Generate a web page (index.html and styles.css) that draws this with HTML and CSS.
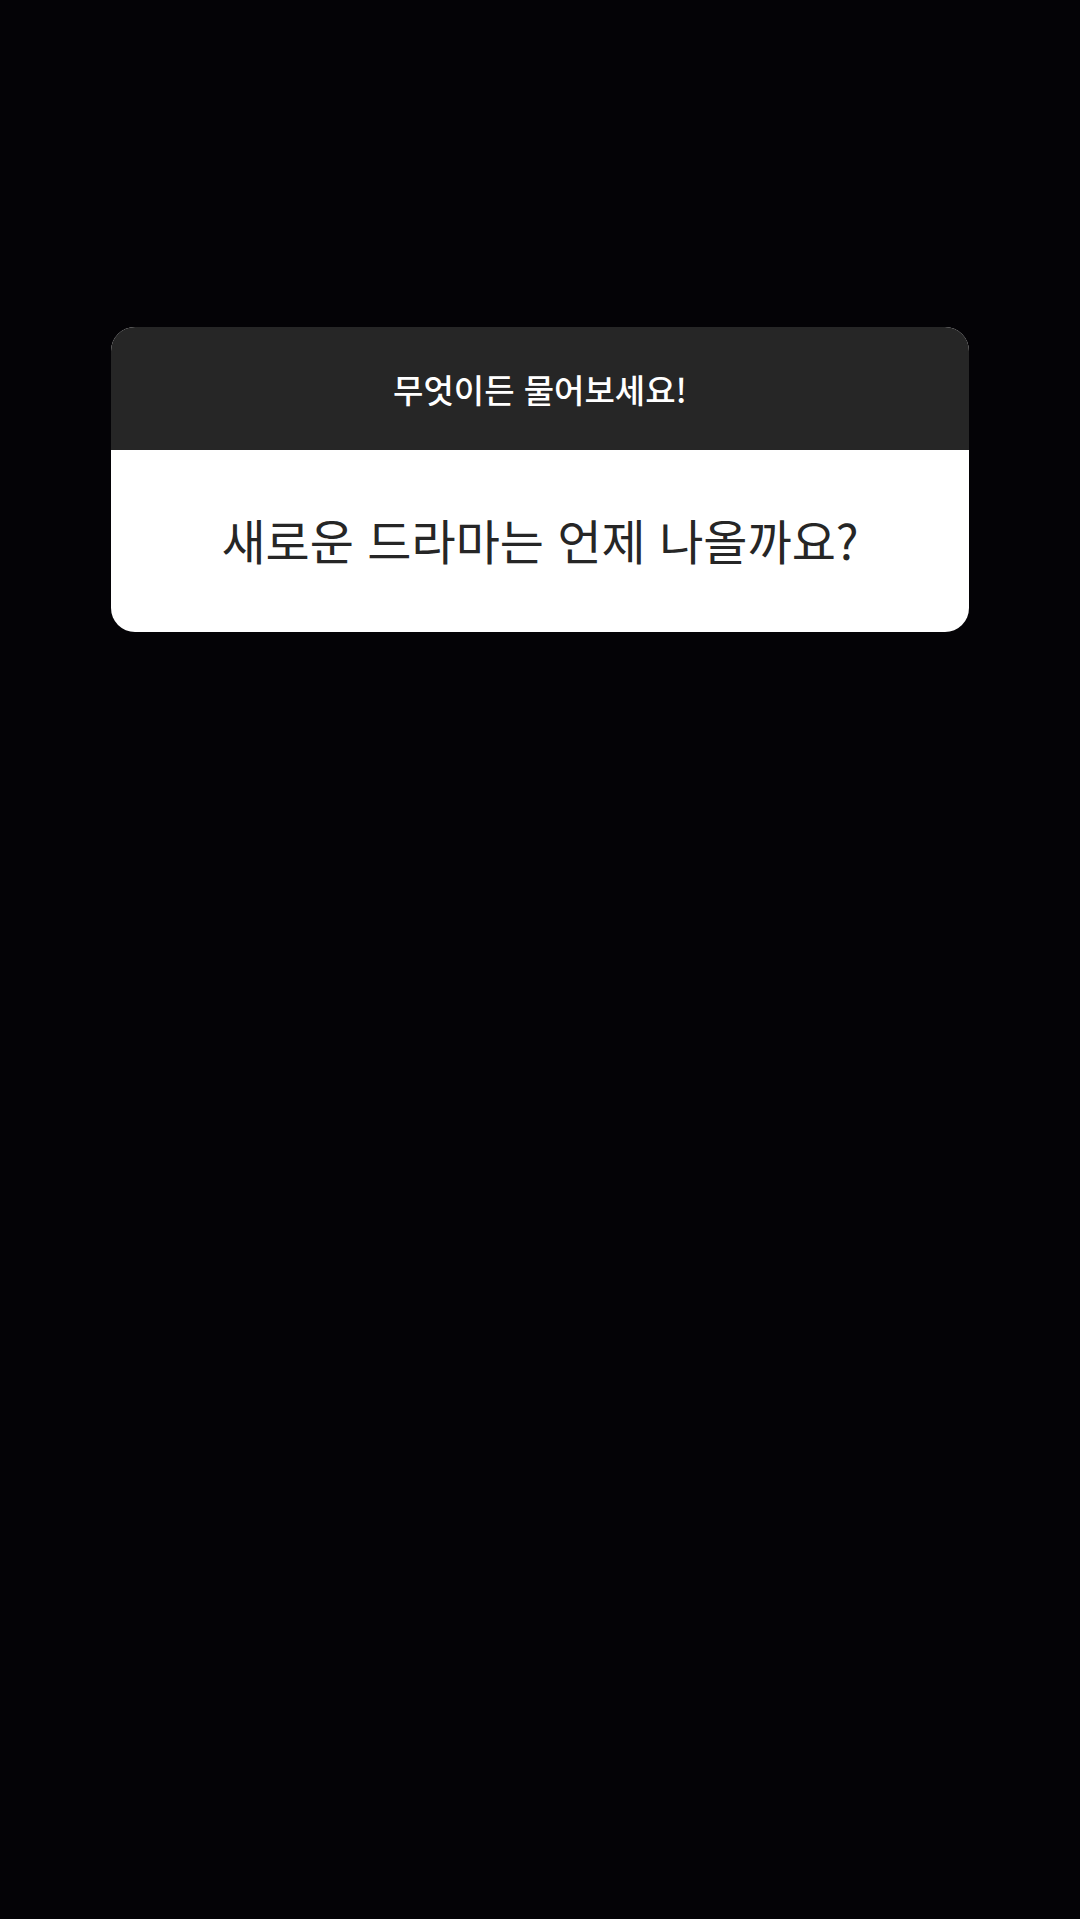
FILE: index.html
```html
<!DOCTYPE html>
<html lang="ko">
<head>
    <meta charset="UTF-8" />
    <meta name="viewport" content="width=device-width, initial-scale=1" />
    <title>질문</title>
    <link rel="stylesheet" href="styles.css">
</head>
<body>
    <div class="story">
        <div class="question-card">
            <div class="question-head">무엇이든 물어보세요!</div>
            <div class="question-body">새로운 드라마는 언제 나올까요?</div>
        </div>
    </div>
</body>
</html>
```

FILE: styles.css
```css
html {
    height: 100%;
    background: #040306;
}
body {
    margin: 0;
    min-height: 100vh;
    font-family: 'Noto Sans CJK KR', 'Noto Sans', sans-serif;
    background: #040306;
}
.story {
    padding: 327px 111px 0 111px;
}
.question-card {
    border-radius: 24px;
    overflow: hidden;
    background: #fff;
}
.question-head {
    height: 123px;
    display: flex;
    align-items: center;
    justify-content: center;
    background: #262626;
    color: #fff;
    font-size: 33px;
    font-weight: 500;
}
.question-body {
    height: 182px;
    display: flex;
    align-items: center;
    justify-content: center;
    padding-bottom: 4px;
    box-sizing: border-box;
    color: #262626;
    font-size: 48px;
    font-weight: 400;
}
```
